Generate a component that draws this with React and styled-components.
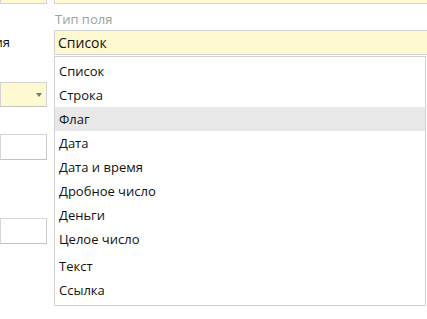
import React from 'react';
import styled, { createGlobalStyle } from 'styled-components';

const GlobalStyle = createGlobalStyle`
  html, body {
    margin: 0;
    padding: 0;
    background: #ffffff;
    overflow: hidden;
  }
  body {
    font-family: "Open Sans", "Noto Sans", "Liberation Sans", sans-serif;
    font-size: 13px;
    color: #1a1a1a;
  }
`;

const Page = styled.div`
  display: flex;
  gap: 7px;
  width: 427px;
  height: 319px;
  overflow: hidden;
`;

const LeftColumn = styled.div`
  display: flex;
  flex-direction: column;
  width: 47px;
  flex-shrink: 0;
`;

const RightColumn = styled.div`
  display: flex;
  flex-direction: column;
  width: 373px;
  flex-shrink: 0;
`;

// поле, обрезанное верхним краем окна
const CutField = styled.div`
  height: 3px;
  background: #fff9d1;
  border: 1px solid #d3d3d3;
  border-top: none;
  border-right: ${({ $open }) => ($open ? 'none' : '1px solid #d3d3d3')};
`;

const SideLabel = styled.div`
  display: flex;
  justify-content: flex-end;
  white-space: nowrap;
  padding-right: 37px;
  margin-top: 29px;
  height: 18px;
  line-height: 18px;
  color: #111;
`;

const Select = styled.div`
  position: relative;
  height: 23px;
  margin-top: ${({ $top }) => $top}px;
  background: #fff9d1;
  border: 1px solid #d3d3d3;
  border-bottom-color: #c4c4c4;
`;

const Caret = styled.span`
  position: absolute;
  right: 4px;
  top: 10px;
  width: 0;
  height: 0;
  border-left: 3px solid transparent;
  border-right: 3px solid transparent;
  border-top: 4px solid #7a7a7a;
`;

const Input = styled.div`
  height: 24px;
  margin-top: ${({ $top }) => $top}px;
  background: #ffffff;
  border: 1px solid #d6d6d6;
  border-bottom-color: #c2c2c2;
  border-right-color: #c9c9c9;
`;

const FieldLabel = styled.div`
  height: 26px;
  line-height: 30px;
  color: #98a595;
  padding-left: 1px;
`;

const ValueBox = styled.div`
  height: 23px;
  line-height: 23px;
  padding-left: 3px;
  background: #fff9d1;
  border: 1px solid #d3d3d3;
  border-right: none;
  font-size: 14px;
  color: #111;
`;

const List = styled.div`
  margin-top: 1px;
  width: 370px;
  padding: 2px 0 3px;
  background: #ffffff;
  border: 1px solid #d2d2d2;
`;

const Item = styled.div`
  height: 24px;
  line-height: 24px;
  padding-left: 4px;
  margin-top: ${({ $gap }) => ($gap ? 3 : 0)}px;
  background: ${({ $active }) => ($active ? '#e8e8e8' : 'transparent')};
  color: #111;
`;

const types = [
  'Список',
  'Строка',
  'Флаг',
  'Дата',
  'Дата и время',
  'Дробное число',
  'Деньги',
  'Целое число',
  'Текст',
  'Ссылка',
];

export default function App() {
  return (
    <>
      <GlobalStyle />
      <Page>
        <LeftColumn>
          <CutField />
          <SideLabel>Категория</SideLabel>
          <Select $top={31}>
            <Caret />
          </Select>
          <Input $top={27} />
          <Input $top={58} />
        </LeftColumn>
        <RightColumn>
          <CutField $open />
          <FieldLabel>Тип поля</FieldLabel>
          <ValueBox>Список</ValueBox>
          <List>
            {types.map((t) => (
              <Item key={t} $active={t === 'Флаг'} $gap={t === 'Текст'}>
                {t}
              </Item>
            ))}
          </List>
        </RightColumn>
      </Page>
    </>
  );
}
